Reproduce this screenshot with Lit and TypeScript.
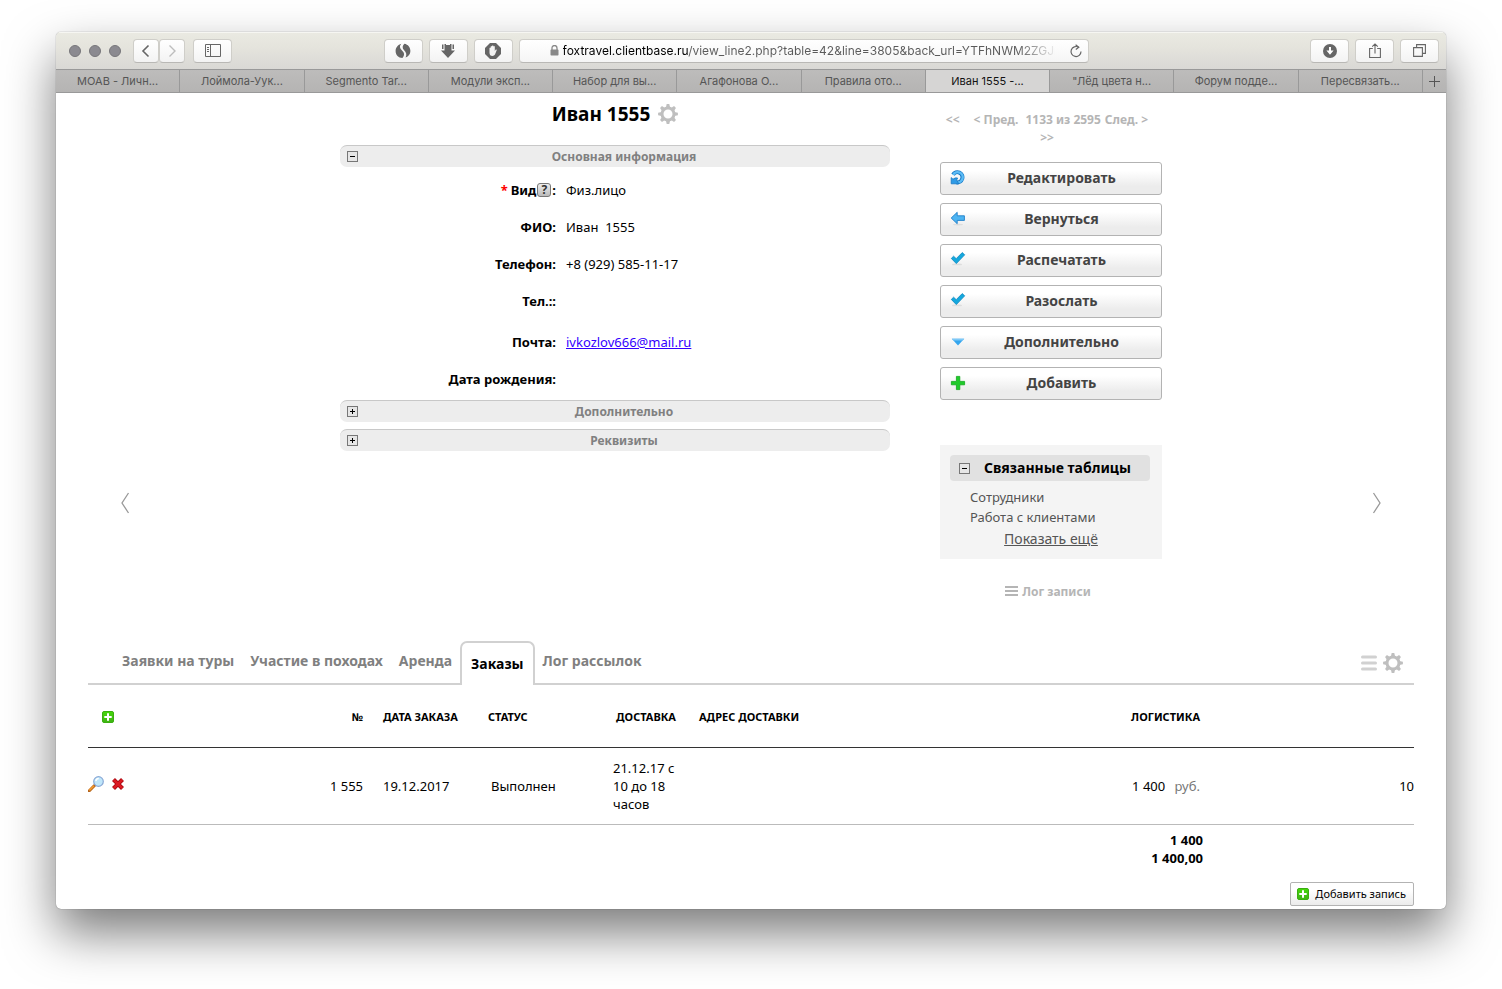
import { LitElement, html, css, svg, nothing } from "lit";
import { customElement, state } from "lit/decorators.js";
import { classMap } from "lit/directives/class-map.js";

const browserTabs = [
  "МОАВ - Личн...",
  "Лоймола-Уук...",
  "Segmento Tar...",
  "Модули эксп...",
  "Набор для вы...",
  "Агафонова О...",
  "Правила ото...",
  "Иван 1555 -...",
  "\"Лёд цвета н...",
  "Форум подде...",
  "Пересвязать...",
];

const gear = html`<svg class="gear" width="20" height="20" viewBox="0 0 20 20" aria-hidden="true">
  <circle cx="10" cy="10" r="6" fill="none" stroke="currentColor" stroke-width="3" />
  ${[0, 45, 90, 135, 180, 225, 270, 315].map(
    (a) => svg`<path d="M7.9 3.6 8.7.1h2.6l.8 3.500z" fill="currentColor" transform="rotate(${a} 10 10)"/>`
  )}
</svg>`;

const plusBox = html`<svg width="12" height="12" viewBox="0 0 12 12" aria-hidden="true">
  <defs><linearGradient id="pb" x1="0" y1="0" x2="0" y2="1"><stop offset="0" stop-color="#45d80a" /><stop offset="1" stop-color="#3fb314" /></linearGradient></defs>
  <rect x=".5" y=".5" width="11" height="11" rx="1.5" fill="url(#pb)" stroke="#3aae10" />
  <path d="M6 2.3v7.4M2.3 6h7.4" stroke="#fff" stroke-width="2" />
</svg>`;

const check = html`<svg width="16" height="16" viewBox="0 0 16 16" aria-hidden="true">
  <ellipse cx="7" cy="12.400" rx="5" ry=".9" fill="#ddd" />
  <path d="M1.300 6.400 3.600 4.200l2.600 2.500L12.200.6 14.700 2.800 6.300 11.600z" fill="#14a8dd" stroke="#0b86c0" stroke-width=".8" />
</svg>`;

const actions = [
  {
    label: "Редактировать",
    icon: html`<svg width="16" height="16" viewBox="0 0 16 16" aria-hidden="true">
      <path d="M3 4.600A5.100 5.100 0 1 1 6.500 12.300" fill="none" stroke="#1677c4" stroke-width="4" />
      <path d="M3.200 4.800A5.100 5.100 0 1 1 6.500 12.300" fill="none" stroke="#5cbcf6" stroke-width="2.400" />
      <path d="M1.200 7.600 3 9.200Q5 7.400 7.600 8L6.600 10.200l2.200 3.600H1.200z" fill="#2f9be6" stroke="#1677c4" stroke-width=".8" />
    </svg>`,
  },
  {
    label: "Вернуться",
    icon: html`<svg width="16" height="16" viewBox="0 0 16 16" aria-hidden="true">
      <ellipse cx="8" cy="13.600" rx="5" ry=".9" fill="#ddd" />
      <path d="M1.200 7 7.200 1.300V4.800h7.200v4.600H7.200v3.300z" fill="#4db4f2" stroke="#1e7fc8" stroke-width=".9" />
    </svg>`,
  },
  { label: "Распечатать", icon: check },
  { label: "Разослать", icon: check },
  {
    label: "Дополнительно",
    icon: html`<svg width="16" height="16" viewBox="0 0 16 16" aria-hidden="true">
      <path d="M1.800 4.800h12.400L8 11.600z" fill="#35a6ee" />
      <path d="M1.800 4.800h12.400l-1.400 1.600H3.200z" fill="#7cc8f7" />
    </svg>`,
  },
  {
    label: "Добавить",
    icon: html`<svg width="16" height="16" viewBox="0 0 16 16" aria-hidden="true">
      <path d="M6.400 1.400h3.400v5h4.800v3.400H9.800v4.800H6.400V9.800H1.400V6.400h5z" fill="#1fcb2a" stroke="#10a81a" stroke-width=".8" />
    </svg>`,
  },
];

const fields = [
  { label: "Вид", value: "Физ.лицо", required: true },
  { label: "ФИО", value: "Иван\u00a0 1555" },
  { label: "Телефон", value: "+8 (929) 585-11-17" },
  { label: "Тел.:", value: "" },
  { label: "Почта", value: "ivkozlov666@mail.ru", mail: true },
  { label: "Дата рождения", value: "" },
];

const tables = ["Заявки на туры", "Участие в походах", "Аренда", "Заказы", "Лог рассылок"];

@customElement("browser-chrome")
export class BrowserChrome extends LitElement {
  static styles = css`
    :host {
      display: block;
      font: 11px/16px Inter, "Liberation Sans", sans-serif;
    }
    button {
      font: inherit;
      padding: 0;
      margin: 0;
    }
    .toolbar {
      display: flex;
      align-items: center;
      height: 37px;
      padding: 0 7px 0 13px;
      background: linear-gradient(#eaeae2, #e5e4dd 40%, #d9d8d5);
      box-shadow: inset 0 1px #f6f6f2;
    }
    .lights {
      display: flex;
      gap: 8px;
      margin-right: 12px;
    }
    .light {
      width: 12px;
      height: 12px;
      box-sizing: border-box;
      border: 1px solid #77767a;
      border-radius: 50%;
      background: #8b8a90;
    }
    .btn {
      display: flex;
      align-items: center;
      justify-content: center;
      width: 39px;
      height: 24px;
      box-sizing: border-box;
      border: 1px solid #cfcec9;
      border-bottom-color: #b9b8b5;
      border-radius: 4px;
      background: linear-gradient(#fff, #f3f3f3);
      color: #666;
    }
    .nav {
      width: 26px;
    }
    .off {
      color: #bdbdbd;
    }
    .side {
      margin-left: 8px;
    }
    .group {
      display: flex;
      gap: 6px;
    }
    .space-a {
      flex: 152 1 0;
    }
    .space-b {
      flex: 222 1 0;
    }
    .address {
      display: flex;
      align-items: center;
      flex: 0 1 570px;
      min-width: 0;
      height: 24px;
      box-sizing: border-box;
      margin-left: 6px;
      padding: 0 5px 0 30px;
      border: 1px solid #cfcec9;
      border-bottom-color: #b9b8b5;
      border-radius: 4px;
      background: linear-gradient(#fff, #f5f5f5);
      color: #888;
    }
    .url {
      flex: 1;
      min-width: 0;
      margin: 0 14px 0 4px;
      padding: 0;
      border: 0;
      outline: 0;
      font: 12px/20px Inter, "Liberation Sans", sans-serif;
      color: transparent;
      background: linear-gradient(90deg, #000 125px, #5a5a5a 125px, #5a5a5a 455px, transparent 495px);
      -webkit-background-clip: text;
      background-clip: text;
    }
    .reload {
      display: flex;
      border: 0;
      background: none;
      color: #666;
    }
    .tabs {
      display: flex;
      height: 24px;
      box-sizing: border-box;
      border: solid #999;
      border-width: 1px 0;
      background: linear-gradient(#bdbcbb, #b5b4b3);
    }
    .tab {
      flex: 1 1 0;
      min-width: 0;
      overflow: hidden;
      white-space: nowrap;
      border: 0;
      border-right: 1px solid #999;
      background: none;
      color: #555;
      text-align: center;
    }
    .current {
      background: #d6d5d4;
      color: #111;
    }
    .plus {
      display: flex;
      align-items: center;
      justify-content: center;
      width: 23px;
      border: 0;
      background: none;
      color: #555;
    }
  `;

  render() {
    return html`
      <div class="toolbar">
        <div class="lights"><span class="light"></span><span class="light"></span><span class="light"></span></div>
        <button class="btn nav" aria-label="Назад">
          <svg width="10" height="14" viewBox="0 0 10 14" fill="none" stroke="currentColor" stroke-width="1.6"><path d="M7.5 1.5 2 7l5.5 5.5" /></svg>
        </button>
        <button class="btn nav off" aria-label="Вперёд">
          <svg width="10" height="14" viewBox="0 0 10 14" fill="none" stroke="currentColor" stroke-width="1.4"><path d="M2.5 1.5 8 7l-5.5 5.5" /></svg>
        </button>
        <button class="btn side" aria-label="Боковая панель">
          <svg width="16" height="13" viewBox="0 0 16 13" fill="none" stroke="currentColor"><path d="M.5.5h15v12H.5zM5.5.5v12M2 3.5h2M2 5.5h2M2 7.5h2" /></svg>
        </button>
        <span class="space-a"></span>
        <div class="group">
          <button class="btn" aria-label="Поиск">
            <svg width="16" height="16" viewBox="0 0 16 16" fill="currentColor"><path d="M6.300.8C4.200 3.200 4.600 5 7 7.400 9.600 9.800 9.800 12 7.400 15 3.400 15 .6 11.800.6 8 .6 4.600 3 1.600 6.300.8z" /><path d="M9.400.8C13 1.400 15.400 4.500 15.400 8c0 3-1.900 5.600-4.800 6.600 1.500-3.200.6-5.400-1.700-7.600C7 5.100 7.400 2.600 9.400.8z" /></svg>
          </button>
          <button class="btn" aria-label="Загрузить">
            <svg width="16" height="16" viewBox="0 0 16 16" fill="currentColor"><path d="M4.500 1H6v1h4V1h1.500v6.500H15L8 15 1 7.500h3.500zM2 1.500h1.500V6H2zM12.500 1.500H14V6h-1.500z" /></svg>
          </button>
          <button class="btn" aria-label="Блокировка рекламы">
            <svg width="16" height="16" viewBox="0 0 16 16"><path fill="currentColor" d="M5 0h6l5 5v6l-5 5H5l-5-5V5z" /><path fill="#f4f4f4" d="M4.500 8V5q.7-.8 1.200 0V3.500q.7-.8 1.300 0V2.800q.8-.8 1.400 0v.6q.8-.7 1.400.1V8l1-1.400q1-.5 1 .3L10 11.600Q9.200 13 7.500 13 4.500 13 4.500 9.500z" /></svg>
          </button>
        </div>
        <div class="address">
          <svg width="9" height="11" viewBox="0 0 9 11"><path d="M2 5V3a2.500 2.500 0 0 1 5 0v2" fill="none" stroke="currentColor" stroke-width="1.300" /><rect x=".5" y="4.600" width="8" height="6" rx=".8" fill="currentColor" /></svg>
          <input class="url" aria-label="Адрес" value="foxtravel.clientbase.ru/view_line2.php?table=42&line=3805&back_url=YTFhNWM2ZGJmNjk" />
          <button class="reload" aria-label="Обновить">
            <svg width="14" height="14" viewBox="0 0 14 14" fill="none" stroke="currentColor" stroke-width="1.200"><path d="M9.500 3.200A5 5 0 1 0 12 7.500" /><path d="M6.600.8 9.800 3.300 6.800 5.600" /></svg>
          </button>
        </div>
        <span class="space-b"></span>
        <div class="group">
          <button class="btn" aria-label="Загрузки">
            <svg width="14" height="14" viewBox="0 0 14 14"><circle cx="7" cy="7" r="7" fill="currentColor" /><path d="M6 3h2v3.600h2.600L7 10.800 3.400 6.600H6z" fill="#fff" /></svg>
          </button>
          <button class="btn" aria-label="Поделиться">
            <svg width="12" height="16" viewBox="0 0 12 16" fill="none" stroke="currentColor" stroke-width="1.100"><path d="M3.800 5.500H.6v9h10.800v-9H8.200M6 10.500V1M3.200 3.600 6 .9l2.800 2.700" /></svg>
          </button>
          <button class="btn" aria-label="Все вкладки">
            <svg width="13" height="13" viewBox="0 0 13 13" fill="none" stroke="currentColor" stroke-width="1.100"><path d="M.6 3.600h8.800v8.800H.6zM3.600 3.400V.6h8.800v8.800H9.600" /></svg>
          </button>
        </div>
      </div>
      <div class="tabs">
        ${browserTabs.map((t, i) => html`<button class=${classMap({ tab: true, current: i === 7 })}>${t}</button>`)}
        <button class="plus" aria-label="Новая вкладка">
          <svg width="11" height="11" viewBox="0 0 11 11" stroke="currentColor"><path d="M5.500 0v11M0 5.500h11" /></svg>
        </button>
      </div>
    `;
  }
}

@customElement("app-root")
export class AppRoot extends LitElement {
  @state() private open: Record<string, boolean> = { main: true, linked: true };
  @state() private current = 3;

  static styles = css`
    :host {
      display: block;
      padding: 32px 56px 80px;
      overflow: hidden;
      background: #fff;
      color: #000;
      font: 13px/18px "Noto Sans", "Open Sans", sans-serif;
    }
    button {
      margin: 0;
      padding: 0;
      border: 0;
      background: none;
      color: inherit;
      font: inherit;
      cursor: pointer;
    }
    svg {
      flex: none;
    }
    .window {
      overflow: hidden;
      border-radius: 5px;
      background: #fff;
      box-shadow: 0 0 1px rgba(0, 0, 0, 0.6), 0 24px 50px rgba(0, 0, 0, 0.52);
    }
    .page {
      padding: 0 32px 3px;
    }
    .record {
      display: flex;
      justify-content: space-between;
      padding: 0 32px 40px;
    }
    .arrow {
      align-self: flex-end;
      margin-bottom: 83px;
      color: #999;
    }
    .columns {
      display: flex;
      gap: 50px;
    }
    .form {
      width: 550px;
    }
    .title {
      display: flex;
      align-items: center;
      justify-content: center;
      gap: 8px;
      margin: 0 0 17px;
      padding-top: 7px;
      font-size: 19px;
      line-height: 28px;
    }
    .gear {
      color: #bfbfbf;
    }
    .icon-btn {
      display: flex;
    }
    .section {
      display: flex;
      align-items: center;
      width: 100%;
      height: 22px;
      margin-bottom: 7px;
      padding-left: 7px;
      border-top: 1px solid #c8c8c8;
      border-radius: 7px;
      background: #ededed;
      color: #808080;
      font-size: 12px;
      font-weight: bold;
    }
    .section span {
      flex: 1;
    }
    .fields {
      margin: 0;
      padding-bottom: 3px;
    }
    .section + .fields {
      margin-top: -3px;
    }
    .field {
      display: grid;
      grid-template-columns: 216px 1fr;
      column-gap: 10px;
      align-items: center;
      height: 37px;
    }
    .field.mail {
      padding-top: 4px;
    }
    .name {
      display: flex;
      align-items: center;
      justify-content: flex-end;
      font-weight: bold;
    }
    .star {
      margin-right: 3px;
      color: #f00;
    }
    .help {
      width: 14px;
      height: 14px;
      margin: 0 1px;
      box-sizing: border-box;
      border: 1px solid #777;
      border-radius: 3px;
      background: linear-gradient(#eee, #bbb);
      color: #333;
      font-size: 12px;
      line-height: 12px;
      font-weight: bold;
    }
    .value {
      margin: 0;
    }
    .link {
      color: #30f;
    }
    .aside {
      width: 222px;
    }
    .pager {
      display: flex;
      flex-wrap: wrap;
      justify-content: center;
      column-gap: 4px;
      padding: 18px 8px 15px 0;
      color: #b5b5b5;
      font-size: 12px;
      font-weight: bold;
    }
    .pager a {
      color: inherit;
      text-decoration: none;
    }
    .first {
      margin-right: 10px;
    }
    .prev {
      margin-right: 3px;
    }
    .actions {
      display: flex;
      flex-direction: column;
      gap: 8px;
    }
    .action {
      display: flex;
      align-items: center;
      height: 33px;
      padding: 0 4px 1px 9px;
      border: 1px solid #b3b3b3;
      border-radius: 3px;
      background: linear-gradient(#fff 25%, #ececec 75%);
      color: #444;
      font-size: 14px;
      font-weight: bold;
    }
    .action span {
      flex: 1;
    }
    .linked {
      margin-top: 45px;
      padding: 10px 12px 10px 10px;
      background: #f4f4f4;
      color: #555;
    }
    .linked-head {
      display: flex;
      align-items: center;
      gap: 14px;
      width: 100%;
      height: 26px;
      margin-bottom: 6px;
      padding-left: 9px;
      border-radius: 4px;
      background: #e1e1e1;
      color: #000;
      font-size: 14px;
      font-weight: bold;
    }
    .linked a {
      display: block;
      padding-left: 20px;
      line-height: 20px;
      color: inherit;
      text-decoration: none;
    }
    .linked .more {
      padding: 2px 0 0 2px;
      text-align: center;
      text-decoration: underline;
      font-size: 14px;
    }
    .log {
      display: flex;
      align-items: center;
      justify-content: center;
      gap: 4px;
      padding: 24px 6px 0 0;
      color: #b5b5b5;
      font-size: 12px;
      font-weight: bold;
      text-decoration: none;
    }
    .bar {
      display: flex;
      align-items: flex-end;
      height: 44px;
      padding-left: 26px;
      box-shadow: inset 0 -2px #d1d1d1;
    }
    .tab {
      height: 44px;
      padding: 0 8px 4px;
      color: #808080;
      font-size: 14px;
      font-weight: bold;
    }
    .tab.active {
      box-sizing: border-box;
      padding: 0 9px;
      border: 2px solid #d1d1d1;
      border-bottom: 0;
      border-radius: 7px 7px 0 0;
      background: #fff;
      color: #000;
    }
    .tools {
      display: flex;
      align-items: center;
      gap: 6px;
      height: 44px;
      margin-left: auto;
      padding-right: 11px;
      color: #d1d1d1;
    }
    .grid {
      width: 100%;
      border-collapse: collapse;
      table-layout: fixed;
    }
    .c-act {
      width: 200px;
    }
    .c-num {
      width: 85px;
    }
    .c-date {
      width: 105px;
    }
    .c-status {
      width: 125px;
    }
    .c-delivery {
      width: 86px;
    }
    .c-log {
      width: 120px;
    }
    .c-last {
      width: 201px;
    }
    th {
      height: 60px;
      padding: 2px 10px 0;
      border-bottom: 1px solid #333;
      font-size: 11px;
      text-align: left;
      white-space: nowrap;
    }
    td {
      height: 76px;
      padding: 0 10px;
      border-bottom: 1px solid #bbb;
    }
    .num {
      text-align: right;
    }
    .mid {
      text-align: center;
    }
    .edge {
      padding: 0;
    }
    .add {
      padding-left: 14px;
    }
    .status {
      padding-left: 13px;
    }
    .cost {
      padding-right: 13px;
      text-align: right;
    }
    .tools-row {
      display: flex;
      align-items: center;
      gap: 7px;
      padding-bottom: 4px;
    }
    .unit {
      margin-left: 6px;
      color: #777;
    }
    .total td {
      height: 36px;
      padding: 6px 10px 0;
      border: 0;
      font-weight: bold;
    }
    .foot {
      display: flex;
      justify-content: flex-end;
      padding-top: 15px;
    }
    .add-row {
      display: flex;
      align-items: center;
      gap: 6px;
      height: 24px;
      padding: 0 7px 0 6px;
      border: 1px solid #b3b3b3;
      border-radius: 2px;
      background: linear-gradient(#fff 30%, #ebebeb);
      font-size: 11px;
    }
  `;

  private toggle(key: string) {
    this.open = { ...this.open, [key]: !this.open[key] };
  }

  private box(key: string) {
    return html`<svg width="11" height="11" viewBox="0 0 11 11" aria-hidden="true">
      <rect x=".5" y=".5" width="10" height="10" fill="#e6e6e6" stroke="#777" />
      <path d=${this.open[key] ? "M3 5.5h5" : "M3 5.5h5M5.5 3v5"} stroke="#000" />
    </svg>`;
  }

  private section(key: string, label: string) {
    return html`<button class="section" aria-expanded=${this.open[key] ? "true" : "false"} @click=${() => this.toggle(key)}>
      ${this.box(key)}<span>${label}</span>
    </button>`;
  }

  render() {
    return html`
      <div class="window">
        <browser-chrome></browser-chrome>
        <main class="page">
          <div class="record">
            <button class="arrow" aria-label="Предыдущая запись">
              <svg width="10" height="22" viewBox="0 0 10 22" fill="none" stroke="currentColor" stroke-width="1.3"><path d="M8.5 1 2 11l6.500 10" /></svg>
            </button>
            <div class="columns">
              <section class="form">
                <h1 class="title">Иван 1555 <button class="icon-btn" aria-label="Настройки">${gear}</button></h1>
                ${this.section("main", "Основная информация")}
                ${this.open.main
                  ? html`<dl class="fields">
                      ${fields.map(
                        (f) => html`<div class=${classMap({ field: true, mail: !!f.mail })}>
                          <dt class="name">
                            ${f.required ? html`<span class="star">*</span>` : nothing}${f.label}${f.required
                              ? html`<button class="help" aria-label="Справка">?</button>`
                              : nothing}:
                          </dt>
                          <dd class="value">${f.mail ? html`<a class="link" href="mailto:${f.value}">${f.value}</a>` : f.value}</dd>
                        </div>`
                      )}
                    </dl>`
                  : nothing}
                ${this.section("extra", "Дополнительно")} ${this.section("details", "Реквизиты")}
              </section>
              <aside class="aside">
                <nav class="pager">
                  <a class="first" href="#first">&lt;&lt;</a><a class="prev" href="#prev">&lt; Пред.</a><span>1133 из 2595</span
                  ><a href="#next">След. &gt;</a><a href="#last">&gt;&gt;</a>
                </nav>
                <div class="actions">
                  ${actions.map((a) => html`<button class="action">${a.icon}<span>${a.label}</span></button>`)}
                </div>
                <div class="linked">
                  <button class="linked-head" aria-expanded=${this.open.linked ? "true" : "false"} @click=${() => this.toggle("linked")}>
                    ${this.box("linked")}<span>Связанные таблицы</span>
                  </button>
                  ${this.open.linked
                    ? html`<a href="#staff">Сотрудники</a><a href="#clients">Работа с клиентами</a
                        ><a class="more" href="#more">Показать ещё</a>`
                    : nothing}
                </div>
                <a class="log" href="#log">
                  <svg width="13" height="12" viewBox="0 0 13 12" stroke="currentColor" stroke-width="2"><path d="M0 1h13M0 5h13M0 9h13" /></svg>
                  Лог записи
                </a>
              </aside>
            </div>
            <button class="arrow" aria-label="Следующая запись">
              <svg width="10" height="22" viewBox="0 0 10 22" fill="none" stroke="currentColor" stroke-width="1.3"><path d="M1.500 1 8 11 1.500 21" /></svg>
            </button>
          </div>

          <div class="bar">
            ${tables.map(
              (t, i) => html`<button class=${classMap({ tab: true, active: i === this.current })} @click=${() => (this.current = i)}>${t}</button>`
            )}
            <div class="tools">
              <button class="icon-btn" aria-label="Список">
                <svg width="16" height="16" viewBox="0 0 16 16" stroke="currentColor" stroke-width="3" stroke-linecap="round"><path d="M1.500 2h13M1.500 8h13M1.500 14h13" /></svg>
              </button>
              <button class="icon-btn" aria-label="Настройки таблицы">${gear}</button>
            </div>
          </div>
          <table class="grid">
            <colgroup>
              <col class="c-act" /><col class="c-num" /><col class="c-date" /><col class="c-status" /><col class="c-delivery" /><col />
              <col class="c-log" /><col class="c-last" />
            </colgroup>
            <thead>
              <tr>
                <th class="add"><button class="icon-btn" aria-label="Добавить запись">${plusBox}</button></th>
                <th class="num">№</th>
                <th>ДАТА ЗАКАЗА</th>
                <th>СТАТУС</th>
                <th class="mid">ДОСТАВКА</th>
                <th>АДРЕС ДОСТАВКИ</th>
                <th class="cost">ЛОГИСТИКА</th>
                <th></th>
              </tr>
            </thead>
            <tbody>
              <tr>
                <td class="edge">
                  <div class="tools-row">
                    <button class="icon-btn" aria-label="Просмотр">
                      <svg width="16" height="16" viewBox="0 0 16 16"><path d="M1 15 6.500 9.500" stroke="#b5651d" stroke-width="3" stroke-linecap="round" /><path d="M1.300 14.400 6 9.700" stroke="#f59b2c" stroke-width="1.500" /><circle cx="10.500" cy="5.500" r="4.800" fill="#bfe6fa" stroke="#8aa9d6" stroke-width="1.200" /><path d="M7.800 5a3 3 0 0 1 3-2.400" stroke="#fff" stroke-width="1.500" fill="none" /></svg>
                    </button>
                    <button class="icon-btn" aria-label="Удалить">
                      <svg width="14" height="14" viewBox="0 0 14 14"><path d="M2.500 2.500 11.500 11.500M11.500 2.500 2.500 11.500" stroke="#a8060e" stroke-width="4.200" /><path d="M2.800 2.800 11.200 11.200M11.200 2.800 2.800 11.200" stroke="#dc1a22" stroke-width="2.600" /></svg>
                    </button>
                  </div>
                </td>
                <td class="num">1 555</td>
                <td>19.12.2017</td>
                <td class="status">Выполнен</td>
                <td>21.12.17 с 10 до 18 часов</td>
                <td></td>
                <td class="cost">1 400 <span class="unit">руб.</span></td>
                <td class="num edge">10</td>
              </tr>
              <tr class="total">
                <td colspan="6"></td>
                <td class="num">1 400<br />1 400,00</td>
                <td></td>
              </tr>
            </tbody>
          </table>
          <div class="foot">
            <button class="add-row">${plusBox}Добавить запись</button>
          </div>
        </main>
      </div>
    `;
  }
}
